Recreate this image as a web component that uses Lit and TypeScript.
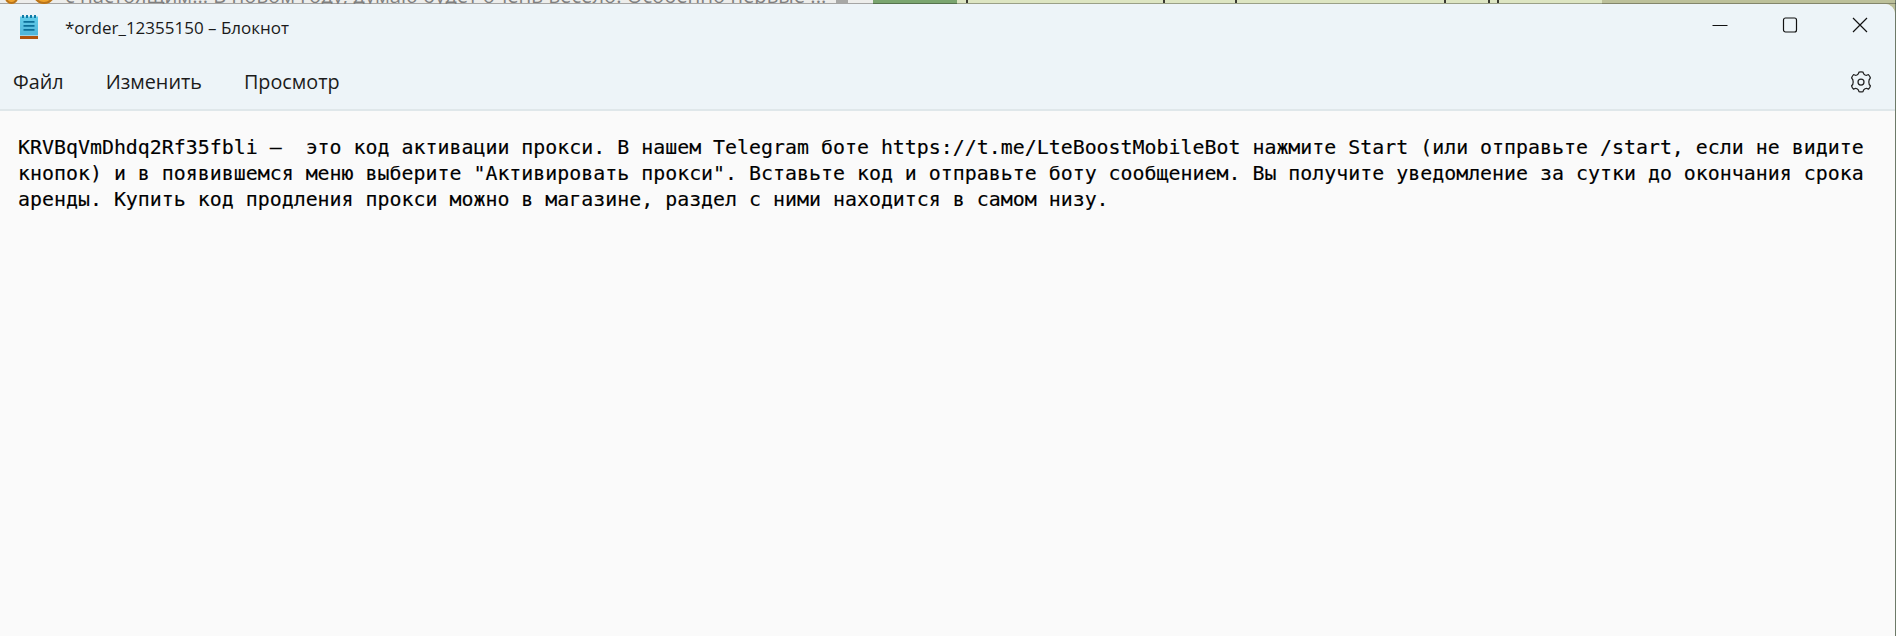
import { LitElement, html, css } from "lit";
import { customElement } from "lit/decorators.js";

const ticks = [966, 1163, 1235, 1444, 1488, 1497];

@customElement("app-root")
export class AppRoot extends LitElement {
  static styles = css`
    :host {
      display: block;
      width: 1896px;
      height: 636px;
      overflow: hidden;
      position: relative;
      background: linear-gradient(90deg, #ededeb 0 873px, #7ba56f 873px 957px, #dde5c2 957px 1602px, #bcc09a 1602px 1895px, #6d7a68 1895px);
    }
    .strip {
      height: 4px;
      overflow: hidden;
      display: flex;
      white-space: nowrap;
      color: #808080;
      font: 20.2px/1 "Open Sans", sans-serif;
      box-shadow: inset 0 -1px 0 rgba(0, 0, 0, 0.3);
    }
    .emoji {
      flex: none;
      border-radius: 50%;
      background: #f0a32a;
      box-shadow: inset 0 0 0 2px #b9741c;
    }
    .e1 { width: 13px; height: 13px; margin: -9px 0 0 5px; }
    .e2 { width: 22px; height: 22px; margin: -18px 0 0 15px; }
    .msg { margin: -15px 0 0 10px; }
    .tick {
      position: absolute;
      top: 0;
      width: 2px;
      height: 3px;
      background: #3a3a30;
    }
    .pin {
      position: absolute;
      top: 0;
      left: 836px;
      width: 12px;
      height: 3px;
      background: #a8a8a6;
    }
    .win {
      height: 632px;
      margin-right: 1px;
      background: #fafafa;
      border-radius: 0 10px 0 0;
      box-sizing: border-box;
      overflow: hidden;
      display: flex;
      flex-direction: column;
    }
    .chrome {
      height: 107px;
      flex: none;
      background: #edf4f8;
      border-bottom: 2px solid #dfe7ea;
      box-sizing: border-box;
      display: flex;
      flex-direction: column;
    }
    .title {
      height: 47px;
      display: flex;
      align-items: center;
      font: 17px "Open Sans", sans-serif;
      color: #1a1a1a;
    }
    .ico { margin-left: 20px; width: 18px; height: 24px; margin-top: -2px; flex: none; }
    .name { margin-left: 27px; flex: 1; }
    .winbtns { display: flex; align-items: center; gap: 54px; margin: -5px 27px 0 0; }
    .menu {
      flex: 1;
      display: flex;
      align-items: center;
      gap: 42px;
      padding: 3px 22px 0 13px;
      font: 19.8px "Open Sans", sans-serif;
      color: #1b1b1b;
    }
    .sp { flex: 1; }
    .text {
      flex: 1;
      padding: 24px 18px 0 18px;
      font: 19.92px/26px "DejaVu Sans Mono", monospace;
      color: #000;
      white-space: pre;
      -webkit-text-stroke: 0.15px #000;
    }
  `;

  render() {
    return html`
      <div class="strip">
        <span class="emoji e1"></span><span class="emoji e2"></span>
        <span class="msg">с настоящим... В новом году, думаю будет очень весело. Особенно первые ...</span>
      </div>
      <i class="pin"></i>
      ${ticks.map((x) => html`<i class="tick" style="left:${x}px"></i>`)}
      <div class="win">
        <div class="chrome">
          <div class="title">
            <svg class="ico" viewBox="0 0 18 24">
              <defs>
                <linearGradient id="pad" x1="0" y1="0" x2="0" y2="1">
                  <stop offset="0" stop-color="#62cdea" />
                  <stop offset="1" stop-color="#4fb4da" />
                </linearGradient>
              </defs>
              <rect x="0" y="1.5" width="18" height="19" fill="url(#pad)" />
              <rect x="0" y="21" width="18" height="3" fill="#b0530f" />
              <path d="M2 0h2v3H2zM6 0h2v3H6zM10 0h2v3h-2zM14 0h2v3h-2z" fill="#0f7ba6" />
              <path d="M3.5 6h11v1.7h-11zM3.5 10h11v1.7h-11zM3.5 14h11v1.7h-11z" fill="#0b6f99" />
            </svg>
            <span class="name">*order_12355150 – Блокнот</span>
            <div class="winbtns">
              <svg width="16" height="16" viewBox="0 0 16 16"><path d="M0.5 8.5h15" stroke="#111" stroke-width="1" /></svg>
              <svg width="16" height="16" viewBox="0 0 16 16"><rect x="1.5" y="1" width="13" height="14" rx="2" fill="none" stroke="#111" stroke-width="1.2" /></svg>
              <svg width="16" height="16" viewBox="0 0 16 16"><path d="M1 1l14 14M15 1L1 15" stroke="#111" stroke-width="1.2" /></svg>
            </div>
          </div>
          <div class="menu">
            <span>Файл</span><span>Изменить</span><span>Просмотр</span>
            <span class="sp"></span>
            <svg width="24" height="24" viewBox="0 0 24 24" fill="none" stroke="#222" stroke-width="1.25" stroke-linejoin="round">
              <circle cx="12" cy="12" r="3" />
              <path d="M10 2.2c1.3-.4 2.7-.4 4 0 .3 1.5 1 2.3 2 2.8 1 .5 2.2.4 3.4-.4 1 .9 1.7 2.1 2 3.4-1.1.9-1.6 2.2-1.6 3.9s.5 3 1.6 3.9c-.3 1.3-1 2.5-2 3.4-1.2-.8-2.4-.9-3.4-.4-1 .5-1.7 1.3-2 2.8-1.3.4-2.7.4-4 0-.3-1.5-1-2.3-2-2.8-1-.5-2.2-.4-3.4.4-1-.9-1.7-2.1-2-3.4 1.1-.9 1.6-2.2 1.6-3.9s-.5-3-1.6-3.9c.3-1.3 1-2.5 2-3.4 1.2.8 2.4.9 3.4.4 1-.5 1.7-1.3 2-2.8z" />
            </svg>
          </div>
        </div>
        <div class="text">KRVBqVmDhdq2Rf35fbli —  это код активации прокси. В нашем Telegram боте https://t.me/LteBoostMobileBot нажмите Start (или отправьте /start, если не видите
кнопок) и в появившемся меню выберите "Активировать прокси". Вставьте код и отправьте боту сообщением. Вы получите уведомление за сутки до окончания срока
аренды. Купить код продления прокси можно в магазине, раздел с ними находится в самом низу.</div>
      </div>
    `;
  }
}
